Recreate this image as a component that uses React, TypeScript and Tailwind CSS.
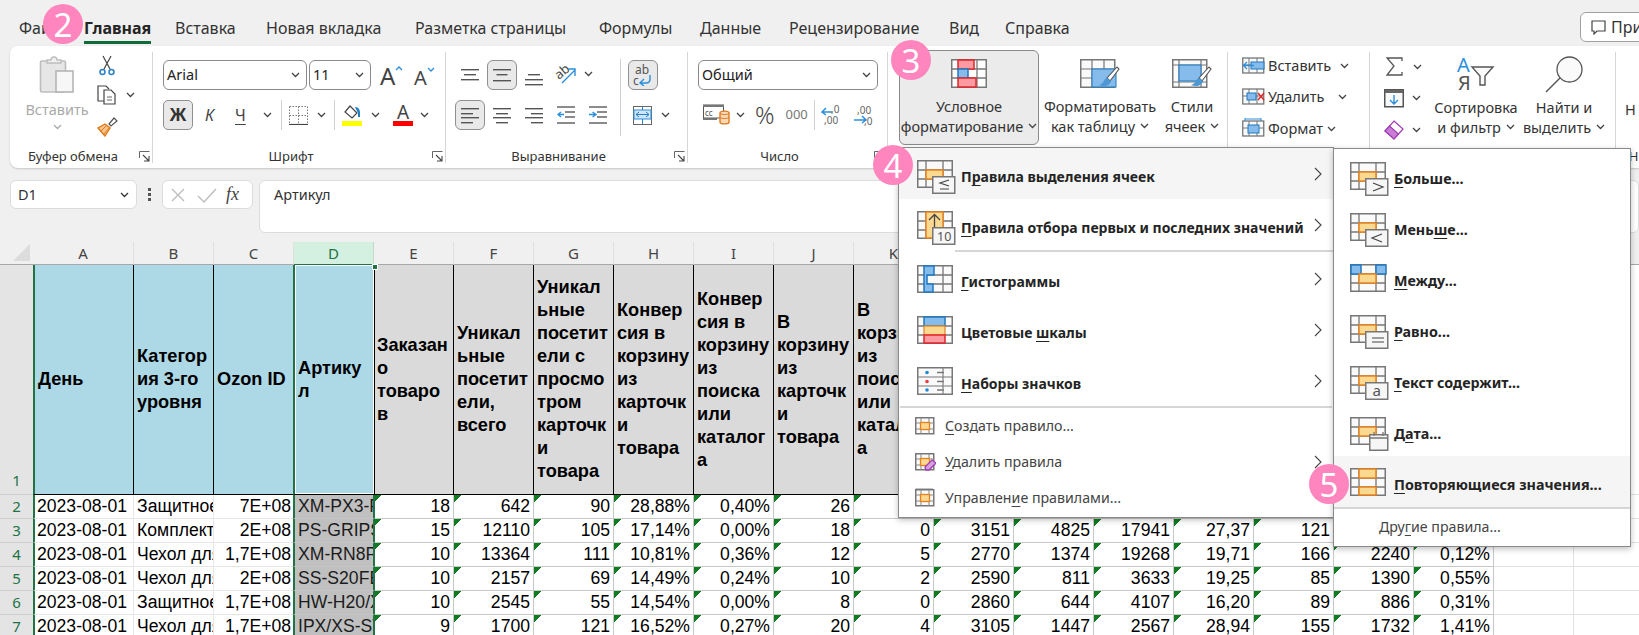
import React from "react";

const UI = "font-['Noto_Sans',sans-serif]";

function Chev({ c = "#444", className = "" }: { c?: string; className?: string }) {
  return (
    <svg width="9" height="6" viewBox="0 0 9 6" className={"shrink-0 " + className}>
      <path d="M1 1l3.5 3.5L8 1" fill="none" stroke={c} strokeWidth="1.3" />
    </svg>
  );
}

function Expand() {
  return (
    <svg width="11" height="11" viewBox="0 0 11 11" className="shrink-0">
      <path d="M.5 7V.5H10.5" fill="none" stroke="#666" />
      <path d="M10 10L4 4M10 5v5H5" fill="none" stroke="#444" strokeWidth="1.1" />
    </svg>
  );
}

function Group({ w, label, children, expand }: { w: string; label?: string; children: React.ReactNode; expand?: boolean }) {
  return (
    <div className={"mt-[6px] flex h-[111px] shrink-0 flex-col border-r border-[#d6d6d6] " + w}>
      <div className="min-h-0 flex-1">{children}</div>
      <div className="flex h-[14px] items-center">
        <div className="flex-1 whitespace-nowrap text-center text-[13px] leading-[14px] text-[#333]">{label}</div>
        <div className="flex w-[16px] justify-center">{expand ? <Expand /> : null}</div>
      </div>
    </div>
  );
}

function Lines({ ys, anchor }: { ys: [number, number][]; anchor?: string }) {
  return (
    <svg width="18" height="18" viewBox="0 0 18 18" className="shrink-0">
      {ys.map(([y, w], i) => {
        const x = anchor === "r" ? 18 - w : anchor === "c" ? (18 - w) / 2 : 0;
        return <rect key={i} x={x} y={y} width={w} height="1.4" fill="#555" />;
      })}
    </svg>
  );
}

function Sel({ w, text, ml }: { w: string; text: string; ml?: string }) {
  return (
    <div className={"flex h-[30px] items-center justify-between rounded-[6px] border border-[#8a8a8a] bg-white pl-[3px] pr-[6px] text-[14.5px] text-[#222] " + w + " " + (ml ?? "")}>
      <span>{text}</span>
      <Chev />
    </div>
  );
}

function VDiv({ className = "" }: { className?: string }) {
  return <div className={"h-[30px] w-px shrink-0 bg-[#d0d0d0] " + className} />;
}

function PasteIcon() {
  return (
    <svg width="36" height="40" viewBox="0 0 36 40" className="shrink-0">
      <rect x="1.5" y="6" width="25" height="31" rx="1.5" fill="#e6e6e6" stroke="#bdbdbd" strokeWidth="1.6" />
      <path d="M8 8V5h4c0-4 6-4 6 0h4v3z" fill="#f0f0f0" stroke="#bdbdbd" strokeWidth="1.4" />
      <rect x="17" y="16" width="17" height="21" fill="#f7f7f7" stroke="#b5b5b5" strokeWidth="1.6" />
    </svg>
  );
}

function Scissors() {
  return (
    <svg width="18" height="21" viewBox="0 0 18 21" className="shrink-0">
      <path d="M5 1l7 13M13 1L6 14" stroke="#444" strokeWidth="1.2" fill="none" />
      <circle cx="4.5" cy="17" r="2.5" fill="none" stroke="#2a7fc9" strokeWidth="1.5" />
      <circle cx="13.5" cy="17" r="2.5" fill="none" stroke="#2a7fc9" strokeWidth="1.5" />
    </svg>
  );
}

function CopyIcon() {
  return (
    <svg width="20" height="20" viewBox="0 0 20 20" className="shrink-0">
      <path d="M7 16H1V1h8l3 3" fill="#fff" stroke="#444" strokeWidth="1.2" />
      <path d="M7 5h7l4 4v10H7z" fill="#fff" stroke="#444" strokeWidth="1.2" />
      <path d="M10 12h5M10 15h5" stroke="#666" />
    </svg>
  );
}

function Brush() {
  return (
    <svg width="21" height="20" viewBox="0 0 21 20" className="shrink-0">
      <path d="M1 11l7 8 5-8-5-4z" fill="#f6c48c" stroke="#e07a1a" strokeWidth="1.4" />
      <path d="M4 14l5-5M7 17l5-6" stroke="#e07a1a" />
      <path d="M12 7l5-6 3 3-6 5z" fill="#fff" stroke="#555" strokeWidth="1.2" />
    </svg>
  );
}

function GrowA({ up }: { up?: boolean }) {
  return (
    <div className="flex w-[22px] items-start text-[#444]">
      <span className={"leading-none " + (up ? "text-[24px]" : "text-[20px] mt-[3px]")}>A</span>
      <svg width="8" height="5" viewBox="0 0 8 5" className="mt-[2px] shrink-0">
        <path d={up ? "M1 4l3-3 3 3" : "M1 1l3 3 3-3"} fill="none" stroke="#2a8fdc" strokeWidth="1.3" />
      </svg>
    </div>
  );
}

function BordersIcon() {
  return (
    <svg width="19" height="19" viewBox="0 0 19 19" className="shrink-0">
      <path d="M.5.5h18M.5 9.5h18M.5.5v18M9.5.5v18M18.5.5v18" stroke="#777" strokeDasharray="1.5 1.5" fill="none" />
      <path d="M0 18.5h19" stroke="#444" strokeWidth="1.2" />
    </svg>
  );
}

function FillIcon() {
  return (
    <div className="flex w-[20px] flex-col items-center">
      <svg width="20" height="15" viewBox="0 0 20 15">
        <path d="M8 1l7 7-5 5-7-6z" fill="#fff" stroke="#444" strokeWidth="1.2" />
        <path d="M13 2c3 0 5 2 5 6v4h-2V8z" fill="#1f7fc4" />
      </svg>
      <div className="mt-px h-[5px] w-[20px] bg-[#ffff00]" />
    </div>
  );
}

function ColorA() {
  return (
    <div className="flex w-[20px] flex-col items-center">
      <span className="h-[15px] text-[19px] leading-[15px] text-[#444]">A</span>
      <div className="mt-px h-[5px] w-[20px] bg-[#ff0000]" />
    </div>
  );
}

function Orient() {
  return (
    <svg width="21" height="20" viewBox="0 0 21 20" className="shrink-0">
      <text x="0" y="12" fontSize="13" fill="#444" transform="rotate(-40 6 8)" fontFamily="Noto Sans">ab</text>
      <path d="M7 18L20 5M13 4h7v7" fill="none" stroke="#2a8fdc" strokeWidth="1.4" />
    </svg>
  );
}

function WrapIcon() {
  return (
    <svg width="20" height="22" viewBox="0 0 20 22" className="shrink-0">
      <text x="2" y="10" fontSize="12" fill="#555" fontFamily="Noto Sans">ab</text>
      <text x="0" y="21" fontSize="12" fill="#555" fontFamily="Noto Sans">c</text>
      <path d="M17 11v4c0 3-2 4-4 4H8M11 15l-4 4 4 3" fill="none" stroke="#2a8fdc" strokeWidth="1.4" />
    </svg>
  );
}

function MergeIcon() {
  return (
    <svg width="19" height="19" viewBox="0 0 19 19" className="shrink-0">
      <rect x=".5" y=".5" width="18" height="18" fill="#fff" stroke="#666" />
      <rect x="1" y="4" width="17" height="9" fill="#cfe6f8" stroke="#2a8fdc" />
      <path d="M3 8.5h13M6 6L3 8.5 6 11M13 6l3 2.5-3 2.5M9.5 1v3M9.5 13v5" fill="none" stroke="#2a7fc9" />
    </svg>
  );
}

function Indent({ dir }: { dir: "l" | "r" }) {
  return (
    <svg width="18" height="18" viewBox="0 0 18 18" className="shrink-0">
      <path d="M0 1h18M8 6h10M8 11h10M0 17h18" stroke="#666" strokeWidth="1.3" />
      <path d={dir === "l" ? "M7 8.5H1M4 6L1 8.5 4 11" : "M0 8.5h6M3.500 6L7 8.5 3.500 11"} fill="none" stroke="#2a8fdc" strokeWidth="1.4" />
    </svg>
  );
}

function Currency() {
  return (
    <svg width="28" height="22" viewBox="0 0 28 22" className="shrink-0">
      <rect x=".5" y="1" width="20" height="13" fill="#fff" stroke="#555" />
      <path d="M0 1h21v2H0zM0 14h14v2H0z" fill="#777" />
      <text x="2" y="12" fontSize="8" fill="#555" fontFamily="Noto Sans">cc</text>
      <path d="M17 9c0-2.500 9-2.500 9 0v9c0 2.500-9 2.500-9 0z" fill="#fbd9b8" stroke="#e07a1a" strokeWidth="1.4" />
      <path d="M17 13c0 2 9 2 9 0M17 9c0 2 9 2 9 0" fill="none" stroke="#e07a1a" />
    </svg>
  );
}

function Decimal({ inc }: { inc?: boolean }) {
  return (
    <svg width="21" height="21" viewBox="0 0 21 21" className="shrink-0">
      {inc ? (
        <>
          <path d="M11 7H1M5 3L1 7l4 3" fill="none" stroke="#2a8fdc" strokeWidth="1.5" />
          <text x="10" y="8" fontSize="10" fill="#666" fontFamily="Noto Sans">,0</text>
          <text x="3" y="19" fontSize="10" fill="#666" fontFamily="Noto Sans">,00</text>
        </>
      ) : (
        <>
          <text x="4" y="9" fontSize="10" fill="#666" fontFamily="Noto Sans">,00</text>
          <path d="M1 15h11M9 11l4 4-4 3" fill="none" stroke="#2a8fdc" strokeWidth="1.5" />
          <text x="11" y="20" fontSize="10" fill="#666" fontFamily="Noto Sans">,0</text>
        </>
      )}
    </svg>
  );
}

const G = "#777";
function Base({ children, bx = 36, by = 28 }: { children?: React.ReactNode; bx?: number; by?: number }) {
  return (
    <svg width="39" height="34" viewBox="0 0 39 34" className="mt-[6px] shrink-0">
      <rect x=".75" y=".75" width={bx - 1.5} height={by - 1.5} fill="#fafafa" stroke={G} strokeWidth="1.5" />
      <path d="M9 1v26M26 1v26M1 10h34M1 19h34" stroke={G} strokeWidth="1.3" fill="none" />
      {children}
    </svg>
  );
}
const orange = { fill: "#fcd991", stroke: "#e8821e", strokeWidth: 1.5 };
const blue = { fill: "#86bcec", stroke: "#1f78c1", strokeWidth: 1.5 };
const red = { fill: "#fe9aa2", stroke: "#e0262a", strokeWidth: 1.5 };
const Center = () => <rect x="9" y="10" width="17" height="9" {...orange} />;
const Box = ({ children }: { children: React.ReactNode }) => (
  <>
    <rect x="15.75" y="16.75" width="22" height="16.5" fill="#f6f6f6" stroke={G} strokeWidth="1.5" />
    {children}
  </>
);

const Ico = {
  le: (
    <Base><Center /><Box><path d="M32 20l-9 3 9 3M23 29h9" fill="none" stroke="#444" strokeWidth="1.2" /></Box></Base>
  ),
  top: (
    <Base>
      <rect x="9" y="1" width="17" height="26" {...orange} />
      <path d="M17.500 20V4M12 9l5.500-5.500L23 9" fill="none" stroke="#444" strokeWidth="1.3" />
      <Box><text x="20" y="30" fontSize="12.500" fill="#555" fontFamily="Noto Sans">10</text></Box>
    </Base>
  ),
  bars: (
    <Base>
      <path d="M7 1h10v9h-7v9h6v8H7z" fill="#86bcec" stroke="#1f78c1" strokeWidth="1.5" />
    </Base>
  ),
  scale: (
    <Base>
      <rect x="7" y="1" width="21" height="9" {...blue} />
      <rect x="7" y="10" width="21" height="9" fill="#fcd991" stroke="#e8821e" strokeWidth="1.2" />
      <rect x="7" y="19" width="21" height="8" {...red} />
    </Base>
  ),
  sets: (
    <svg width="39" height="34" viewBox="0 0 39 34" className="mt-[6px] shrink-0">
      <rect x=".75" y=".75" width="34.500" height="26.500" fill="#fafafa" stroke={G} strokeWidth="1.5" />
      <path d="M1 10h34M1 19h34M26 1v26" stroke={G} strokeWidth="1.1" fill="none" />
      <circle cx="10" cy="5.500" r="1.800" fill="#1f88dc" />
      <circle cx="10" cy="14.500" r="1.800" fill="#f03a3a" />
      <circle cx="10" cy="23" r="1.800" fill="#1f88dc" />
      <path d="M20 5.500h7M20 14.500h7M20 23h7" stroke="#777" strokeWidth="1.4" />
    </svg>
  ),
  gt: (
    <Base><Center /><Box><path d="M23 21l10 4-10 4" fill="none" stroke="#444" strokeWidth="1.2" /></Box></Base>
  ),
  lt: (
    <Base><Center /><Box><path d="M32 21l-10 4 10 4" fill="none" stroke="#444" strokeWidth="1.2" /></Box></Base>
  ),
  between: (
    <Base>
      <rect x="1" y="1" width="10" height="9" {...blue} />
      <rect x="26" y="1" width="10" height="9" {...blue} />
      <Center />
    </Base>
  ),
  eq: (
    <Base><Center /><Box><path d="M22 23h12M22 27h12" stroke="#444" strokeWidth="1.2" /></Box></Base>
  ),
  a: (
    <Base><Center /><Box><text x="22.500" y="30" fontSize="15" fill="#555" fontFamily="Noto Sans">a</text></Box></Base>
  ),
  date: (
    <Base>
      <Center />
      <rect x="19.750" y="17.750" width="18" height="15.500" fill="#f6f6f6" stroke={G} strokeWidth="1.5" />
      <path d="M19 21h19M24 15v4M33 15v4" stroke={G} strokeWidth="1.3" />
    </Base>
  ),
  dup: (
    <Base>
      <rect x="9" y="1" width="17" height="9" {...orange} />
      <rect x="9" y="19" width="17" height="8" {...orange} />
    </Base>
  ),
};

function SmallIco({ kind }: { kind: "new" | "del" | "mng" }) {
  return (
    <svg width="22" height="20" viewBox="0 0 22 20" className="shrink-0">
      {kind === "mng" ? <path d="M2 18V1h17" fill="none" stroke="#888" strokeWidth="1.2" /> : null}
      <rect x="1.750" y="1.750" width="18" height="16" fill="#fafafa" stroke="#777" strokeWidth="1.500" />
      <path d="M7 2v16M15 2v16M2 7h18M2 13h18" stroke="#888" />
      <rect x="6.500" y="6.500" width="9" height="7" fill="#fcd991" stroke="#e8821e" strokeWidth="1.300" />
      {kind === "del" ? <path d="M11 15l7-7 4 3-7 7-3 0z" fill="#d7a1de" stroke="#a03cb4" strokeWidth="1.300" /> : null}
    </svg>
  );
}

function U({ children }: { children: React.ReactNode }) {
  return <span className="underline underline-offset-[3px]">{children}</span>;
}

function Arrow() {
  return (
    <svg width="8" height="14" viewBox="0 0 8 14" className="ml-auto mr-[11px] shrink-0">
      <path d="M1 1l6 6-6 6" fill="none" stroke="#444" strokeWidth="1.1" />
    </svg>
  );
}

function MenuItem({ icon, children, arrow, active, pl = "pl-[18px]", size = "text-[14px]" }: { icon: React.ReactNode; children: React.ReactNode; arrow?: boolean; active?: boolean; pl?: string; size?: string }) {
  return (
    <div className={"flex h-[51px] items-center " + pl + " " + (active ? "bg-[#f5f5f5]" : "")}>
      {icon}
      <div className={"ml-[5px] mt-[6px] whitespace-nowrap font-bold text-[#242424] " + size}>{children}</div>
      {arrow ? <Arrow /> : null}
    </div>
  );
}

function SmallItem({ kind, children, arrow }: { kind: "new" | "del" | "mng"; children: React.ReactNode; arrow?: boolean }) {
  return (
    <div className="flex h-[36px] items-center pl-[15px]">
      <SmallIco kind={kind} />
      <div className="ml-[9px] whitespace-nowrap text-[14.2px] text-[#444]">{children}</div>
      {arrow ? <Arrow /> : null}
    </div>
  );
}

function Badge({ n, pos }: { n: number; pos: string }) {
  return (
    <div className={"absolute flex h-[40px] w-[40px] items-center justify-center rounded-full bg-[#ff85bf] text-[33px] leading-none text-white " + pos}>
      {n}
    </div>
  );
}

const letters = ["A", "B", "C", "D", "E", "F", "G", "H", "I", "J", "K", "L", "M", "N", "O", "P", "Q", "R", "S", "T"];

const heads: { lines: string[]; bg: string }[] = [
  { lines: ["День"], bg: "blue" },
  { lines: ["Категор", "ия 3-го", "уровня"], bg: "blue" },
  { lines: ["Ozon ID"], bg: "blue" },
  { lines: ["Артику", "л"], bg: "sel" },
  { lines: ["Заказан", "о", "товаро", "в"], bg: "gray" },
  { lines: ["Уникал", "ьные", "посетит", "ели,", "всего"], bg: "gray" },
  { lines: ["Уникал", "ьные", "посетит", "ели с", "просмо", "тром", "карточк", "и", "товара"], bg: "gray" },
  { lines: ["Конвер", "сия в", "корзину", "из", "карточк", "и", "товара"], bg: "gray" },
  { lines: ["Конвер", "сия в", "корзину", "из", "поиска", "или", "каталог", "а"], bg: "gray" },
  { lines: ["В", "корзину", "из", "карточк", "и", "товара"], bg: "gray" },
  { lines: ["В", "корзину", "из", "поиска", "или", "каталог", "а"], bg: "gray" },
  { lines: [""], bg: "gray" },
  { lines: [""], bg: "gray" },
  { lines: [""], bg: "gray" },
  { lines: [""], bg: "gray" },
  { lines: [""], bg: "gray" },
  { lines: [""], bg: "gray" },
  { lines: [""], bg: "gray" },
  { lines: [""], bg: "none" },
  { lines: [""], bg: "none" },
];

const rows: string[][] = [
  ["2023-08-01", "Защитное стекло", "7E+08", "XM-PX3-F", "18", "642", "90", "28,88%", "0,40%", "26", "", "", "", "", "", "", "", "", "", ""],
  ["2023-08-01", "Комплект для", "2E+08", "PS-GRIPS", "15", "12110", "105", "17,14%", "0,00%", "18", "0", "3151", "4825", "17941", "27,37", "121", "", "", "", ""],
  ["2023-08-01", "Чехол для", "1,7E+08", "XM-RN8P", "10", "13364", "111", "10,81%", "0,36%", "12", "5", "2770", "1374", "19268", "19,71", "166", "2240", "0,12%", "", ""],
  ["2023-08-01", "Чехол для", "2E+08", "SS-S20FE", "10", "2157", "69", "14,49%", "0,24%", "10", "2", "2590", "811", "3633", "19,25", "85", "1390", "0,55%", "", ""],
  ["2023-08-01", "Защитное стекло", "1,7E+08", "HW-H20/X", "10", "2545", "55", "14,54%", "0,00%", "8", "0", "2860", "644", "4107", "16,20", "89", "886", "0,31%", "", ""],
  ["2023-08-01", "Чехол для", "1,7E+08", "IPX/XS-ST", "9", "1700", "121", "16,52%", "0,27%", "20", "4", "3105", "1447", "2567", "28,94", "155", "1732", "1,41%", "", ""],
];

function Sheet() {
  return (
    <div className="grid grid-cols-[33px_101px_repeat(19,80px)] grid-rows-[23px_230px_repeat(6,24px)] bg-white font-['Liberation_Sans',Arial,sans-serif] text-[17.6px] text-black">
      <div className={"flex items-center justify-end border-b border-[#a8a8a8] bg-[#f0f0f0] pr-[3px] " + UI}>
        <div className="mt-[-2px] h-0 w-0 border-b-[17px] border-l-[17px] border-b-[#dcdcdc] border-l-transparent" />
      </div>
      {letters.map((l) => (
        <div key={l} className={"flex items-center justify-center border-b border-r text-[15px] " + UI + " " + (l === "D" ? "border-r-[#c4d8cc] border-b-[#217346] bg-[#d3f0e0] text-[#217346]" : "border-r-[#e0e0e0] border-b-[#a8a8a8] bg-[#f0f0f0] text-[#444]")}>
          {l}
        </div>
      ))}

      <div className={"flex items-end justify-center border-b border-[#cfcfcf] bg-[#e4e4e4] pb-[3px] text-[15px] text-[#217346] " + UI}>1</div>
      {heads.map((h, i) => {
        const bg = h.bg === "gray" ? "bg-[#dadada] border-r border-r-black border-b border-b-black" : h.bg === "none" ? "border-r border-r-[#e0e0e0] border-b border-b-[#e0e0e0]" : "bg-[#add8e6] border-r border-r-black border-b border-b-black";
        const extra = i === 0 ? " border-l-2 border-l-[#217346]" : i === 3 ? " border-x-2 border-x-[#217346] ml-[-1px] mr-[-1px] z-10" : "";
        return (
          <div key={i} className={"relative flex items-center pl-[3px] text-[18.2px] font-bold leading-[23px] " + bg + extra}>
            <div className="whitespace-nowrap">
              {h.lines.map((t, j) => (
                <div key={j}>{t || "\u00a0"}</div>
              ))}
            </div>
            {i === 3 ? (
              <>
                <div className="absolute inset-0 border border-white" />
                <div className="absolute right-[-4px] top-[-1px] h-[6px] w-[6px] border border-white bg-[#217346]" />
              </>
            ) : null}
          </div>
        );
      })}

      {rows.map((r, ri) => (
        <React.Fragment key={ri}>
          <div className={"flex items-center justify-center border-b border-[#cfcfcf] bg-[#e4e4e4] text-[15px] text-[#217346] " + UI}>{ri + 2}</div>
          {r.map((v, ci) => {
            if (ci < 4) {
              const cls =
                ci === 0
                  ? "border-l-2 border-l-[#217346] border-r border-r-[#e6e6e6] border-b border-b-[#e6e6e6] pl-[2px]"
                  : ci === 1
                  ? "border-r border-r-[#e6e6e6] border-b border-b-[#e6e6e6] pl-[3px]"
                  : ci === 2
                  ? "justify-end border-b border-b-[#e6e6e6] pr-[3px]"
                  : "z-10 ml-[-1px] mr-[-1px] border-x-2 border-x-[#217346] border-b border-b-[#c4c4c4] bg-[#c0c0c0] pl-[3px] text-[#1c1c1c]";
              return (
                <div key={ci} className={"flex items-center overflow-hidden whitespace-nowrap " + cls}>
                  {v}
                </div>
              );
            }
            if (ci >= 18) return <div key={ci} className="border-b border-r border-[#e2e2e2]" />;
            return (
              <div key={ci} className="flex items-center justify-end border-b border-r border-[#c8c8c8] bg-[linear-gradient(135deg,#0f7d1f_5px,transparent_5px)] pr-[3px]">
                {v}
              </div>
            );
          })}
        </React.Fragment>
      ))}
    </div>
  );
}

const BrushOver = () => (
  <>
    <path d="M37 8l-10 11 3 3 9-12z" fill="#fff" stroke="#555" strokeWidth="1.100" />
    <path d="M27 19c-4 1-2 5-8 7 5 2 11 1 12-4z" fill="#4c97d4" />
  </>
);

function Ribbon() {
  const big = "text-[14.5px] leading-[20px] text-[#333] whitespace-nowrap";
  return (
    <div className="ml-[10px] flex h-[122px] rounded-l-[8px] bg-white text-[#333] shadow-[0_1px_2px_rgba(0,0,0,0.18)]">
      <Group w="w-[143px]" label="Буфер обмена" expand>
        <div className="flex">
          <div className="ml-[12px] flex w-[70px] flex-col items-center pt-[3px]">
            <PasteIcon />
            <div className="mt-[4px] text-[14.5px] leading-[20px] text-[#aaaaaa]">Вставить</div>
            <Chev c="#aaa" className="mt-[5px]" />
          </div>
          <div className="ml-[5px] flex flex-col pt-[3px]">
            <div className="ml-[1px]"><Scissors /></div>
            <div className="mt-[9px] flex items-center">
              <CopyIcon />
              <Chev className="ml-[9px]" />
            </div>
            <div className="mt-[12px]"><Brush /></div>
          </div>
        </div>
      </Group>
      <Group w="w-[293px]" label="Шрифт" expand>
        <div className="flex h-[38px] items-end pl-[10px]">
          <Sel w="w-[144px]" text="Arial" />
          <Sel w="w-[62px]" text="11" ml="ml-[2px]" />
          <div className="ml-[9px] flex items-start self-end pb-[2px]"><GrowA up /></div>
          <div className="ml-[12px] flex items-start self-end pb-[2px]"><GrowA /></div>
        </div>
        <div className="mt-[10px] flex h-[30px] items-center pl-[10px]">
          <div className="flex h-[30px] w-[30px] items-center justify-center rounded-[5px] border border-[#8f8f8f] bg-[#e9e9e9] text-[17px] font-bold text-[#333]">Ж</div>
          <span className="ml-[12px] w-[20px] text-[16px] italic text-[#444]">К</span>
          <span className="ml-[10px] w-[17px] text-[16px] text-[#444] underline underline-offset-[3px]">Ч</span>
          <Chev className="ml-[11px]" />
          <VDiv className="ml-[9px]" />
          <span className="ml-[7px]"><BordersIcon /></span>
          <Chev className="ml-[9px]" />
          <VDiv className="ml-[8px]" />
          <span className="ml-[7px]"><FillIcon /></span>
          <Chev className="ml-[9px]" />
          <span className="ml-[13px]"><ColorA /></span>
          <Chev className="ml-[7px]" />
        </div>
      </Group>
      <Group w="w-[242px]" label="Выравнивание" expand>
        <div className="flex">
          <div className="w-[174px]">
            <div className="flex h-[38px] items-end pl-[15px]">
              <div className="mb-[6px]"><Lines ys={[[3, 18], [8, 12], [13, 18]]} anchor="c" /></div>
              <div className="ml-[8px] flex h-[30px] w-[30px] items-center justify-center rounded-[6px] border border-[#8f8f8f] bg-[#e9e9e9]">
                <Lines ys={[[3, 18], [8, 11], [14, 18]]} anchor="c" />
              </div>
              <div className="ml-[8px] mb-[4px]"><Lines ys={[[6, 12], [11, 18], [16, 18]]} anchor="c" /></div>
              <div className="ml-[12px] mb-[5px]"><Orient /></div>
              <Chev className="mb-[13px] ml-[8px]" />
            </div>
            <div className="mt-[10px] flex h-[30px] items-center pl-[9px]">
              <div className="flex h-[30px] w-[30px] items-center justify-center rounded-[6px] border border-[#8f8f8f] bg-[#e9e9e9]">
                <Lines ys={[[2, 18], [7, 12], [11, 18], [16, 12]]} />
              </div>
              <div className="ml-[8px]"><Lines ys={[[2, 18], [7, 12], [11, 18], [16, 12]]} anchor="c" /></div>
              <div className="ml-[14px]"><Lines ys={[[2, 18], [7, 12], [11, 18], [16, 12]]} anchor="r" /></div>
              <div className="ml-[14px]"><Indent dir="l" /></div>
              <div className="ml-[14px]"><Indent dir="r" /></div>
            </div>
          </div>
          <div className="mt-[7px] h-[77px] w-px bg-[#d0d0d0]" />
          <div className="ml-[7px]">
            <div className="mt-[8px] flex h-[30px] w-[30px] items-center justify-center rounded-[6px] border border-[#8f8f8f] bg-[#e9e9e9]">
              <WrapIcon />
            </div>
            <div className="mt-[10px] flex h-[30px] items-center pl-[5px]">
              <MergeIcon />
              <Chev className="ml-[9px]" />
            </div>
          </div>
        </div>
      </Group>
      <Group w="w-[200px]" label="Число" expand>
        <div className="flex h-[38px] items-end pl-[10px]">
          <Sel w="w-[180px]" text="Общий" />
        </div>
        <div className="mt-[10px] flex h-[30px] items-center pl-[15px]">
          <Currency />
          <Chev className="ml-[5px]" />
          <span className="ml-[10px] text-[24px] font-light leading-none text-[#444]">%</span>
          <span className="ml-[11px] text-[13px] text-[#777]">000</span>
          <VDiv className="ml-[6px]" />
          <span className="ml-[6px]"><Decimal inc /></span>
          <span className="ml-[11px]"><Decimal /></span>
        </div>
      </Group>
      <Group w="w-[340px]">
        <div className="flex h-full">
          <div className="ml-[11px] mt-[-2px] flex h-[95px] w-[140px] flex-col items-center rounded-[6px] border border-[#8a8a8a] bg-[#ebebeb] pt-[8px]">
            <svg width="36" height="29" viewBox="0 0 36 29">
              <rect x=".75" y=".75" width="34.5" height="27.500" fill="#fff" stroke={G} strokeWidth="1.5" />
              <path d="M9 1v27M26 1v27M1 10h34M1 19h34" stroke={G} strokeWidth="1.3" />
              <rect x="7" y="1" width="16" height="9" {...red} />
              <rect x="7" y="10" width="10" height="9" {...blue} />
              <rect x="7" y="19" width="18" height="9" {...red} />
            </svg>
            <div className={"mt-[8px] " + big}>Условное</div>
            <div className={"flex items-center " + big}>форматирование<Chev className="ml-[5px]" /></div>
          </div>
          <div className="mt-[7px] flex w-[122px] flex-col items-center">
            <svg width="40" height="29" viewBox="0 0 40 29">
              <rect x=".75" y=".75" width="34" height="27.500" fill="#fafafa" stroke={G} strokeWidth="1.5" />
              <path d="M12 1v27M24 1v27M1 10h34M1 19h34" stroke={G} strokeWidth="1.2" />
              <rect x="12" y="10" width="24" height="18" fill="#86bcec" stroke="#1f78c1" />
              <BrushOver />
            </svg>
            <div className={"mt-[8px] " + big}>Форматировать</div>
            <div className={"flex items-center " + big}>как таблицу<Chev className="ml-[5px]" /></div>
          </div>
          <div className="mt-[7px] flex w-[62px] flex-col items-center">
            <svg width="40" height="29" viewBox="0 0 40 29">
              <rect x=".75" y=".75" width="34" height="27.500" fill="#fafafa" stroke={G} strokeWidth="1.5" />
              <path d="M1 6h34M1 23h34M7 1v27M29 1v27" stroke={G} strokeWidth="1.2" />
              <rect x="7" y="6" width="22" height="16" fill="#86bcec" stroke="#1f78c1" />
              <BrushOver />
            </svg>
            <div className={"mt-[8px] " + big}>Стили</div>
            <div className={"flex items-center " + big}>ячеек<Chev className="ml-[5px]" /></div>
          </div>
        </div>
      </Group>
      <Group w="w-[142px]">
        <div className="mt-[-2px] flex flex-col pl-[14px] text-[14.5px]">
          {[
            ["Вставить", "ml-[9px]", "ins"],
            ["Удалить", "ml-[13px]", "del"],
            ["Формат", "ml-[4px]", "fmt"],
          ].map(([t, m, k]) => (
            <div key={t} className="flex h-[31.500px] items-center">
              <svg width="23" height="22" viewBox="0 0 23 22" className="shrink-0">
                <rect x=".75" y="3" width="21" height="15" fill="#fafafa" stroke={G} strokeWidth="1.3" />
                <path d="M7 3v15M15 3v15M1 10h21" stroke={G} />
                {k === "ins" ? <><rect x="9" y="7" width="13" height="7" fill="#86bcec" stroke="#1f78c1" /><path d="M12 10.500H2M5 7l-3.500 3.500L5 14" fill="none" stroke="#2a8fdc" strokeWidth="1.3" /></> : null}
                {k === "del" ? <><rect x="5" y="7" width="9" height="7" fill="#86bcec" stroke="#1f78c1" /><path d="M16 7l6 7M22 7l-6 7" stroke="#e0262a" strokeWidth="1.4" /></> : null}
                {k === "fmt" ? <><rect x="6" y="7" width="11" height="8" fill="#86bcec" stroke="#1f78c1" /><path d="M3 1h16M3 0v3M19 0v3" stroke="#2a8fdc" /></> : null}
              </svg>
              <span className="ml-[3px] whitespace-nowrap">{t}</span>
              <Chev className={m} />
            </div>
          ))}
        </div>
      </Group>
      <Group w="w-[246px]">
        <div className="flex">
          <div className="ml-[14px] mt-[-1px] flex flex-col">
            <div className="flex h-[31.500px] items-center pl-[2px]">
              <svg width="17" height="19" viewBox="0 0 17 19" className="shrink-0"><path d="M16 4V1H1l7 8-7 9h15v-3" fill="none" stroke="#555" strokeWidth="1.3" /></svg>
              <Chev className="ml-[10px]" />
            </div>
            <div className="flex h-[31.500px] items-center">
              <svg width="20" height="19" viewBox="0 0 20 19" className="shrink-0">
                <rect x=".75" y=".75" width="18.500" height="17" fill="#fafafa" stroke="#555" strokeWidth="1.5" />
                <rect x="1" y="1" width="18" height="3" fill="#666" />
                <path d="M10 6v9M6 11l4 4 4-4" fill="none" stroke="#2a8fdc" strokeWidth="1.4" />
              </svg>
              <Chev className="ml-[8px]" />
            </div>
            <div className="flex h-[31.500px] items-center">
              <svg width="20" height="20" viewBox="0 0 20 20" className="shrink-0">
                <path d="M10 1l9 8-9 10-9-8z" fill="#fff" stroke="#a03cb4" strokeWidth="1.2" />
                <path d="M5.500 6l9 8-4.500 5-9-8z" fill="#c97ed6" stroke="#a03cb4" strokeWidth="1.2" />
              </svg>
              <Chev className="ml-[8px]" />
            </div>
          </div>
          <div className="ml-[9px] flex w-[90px] flex-col items-center pt-[4px] text-[14.5px] leading-[20px]">
            <svg width="38" height="36" viewBox="0 0 38 36">
              <text x="0" y="16" fontSize="20" fill="#2a8fdc" fontFamily="Noto Sans">А</text>
              <text x="1" y="34" fontSize="20" fill="#555" fontFamily="Noto Sans">Я</text>
              <path d="M15 11h21l-8 9v9h-5v-9z" fill="#fafafa" stroke="#555" strokeWidth="1.4" />
            </svg>
            <div className="mt-[5px] whitespace-nowrap">Сортировка</div>
            <div className="flex items-center whitespace-nowrap">и фильтр<Chev className="ml-[5px]" /></div>
          </div>
          <div className="ml-[3px] flex w-[80px] flex-col items-center pt-[4px] text-[14.5px] leading-[20px]">
            <svg width="38" height="38" viewBox="0 0 38 38">
              <circle cx="24.500" cy="13.500" r="12.500" fill="#fafafa" stroke="#555" strokeWidth="1.3" />
              <path d="M15 22L1 36" stroke="#555" strokeWidth="1.5" />
            </svg>
            <div className="mt-[3px]">Найти и</div>
            <div className="flex items-center whitespace-nowrap">выделить<Chev className="ml-[5px]" /></div>
          </div>
        </div>
      </Group>
      <Group w="w-[52px]" label="Н">
        <div className="ml-[9px] mt-[47px] text-[14.5px] leading-[20px]">Н</div>
      </Group>
    </div>
  );
}

export default function App() {
  const tabs: [string, string][] = [
    ["Файл", "w-[65px]"],
    ["Главная", "w-[91px]"],
    ["Вставка", "w-[91px]"],
    ["Новая вкладка", "w-[149px]"],
    ["Разметка страницы", "w-[184px]"],
    ["Формулы", "w-[101px]"],
    ["Данные", "w-[89px]"],
    ["Рецензирование", "w-[160px]"],
    ["Вид", "w-[56px]"],
    ["Справка", "w-[70px]"],
  ];
  return (
    <div className={"relative h-[635px] w-[1639px] overflow-hidden bg-[#f0f0f0] " + UI}>
      <div className="flex h-[46px] items-start pl-[19px] pt-[16px] text-[16px] text-[#333]">
        {tabs.map(([t, w]) => (
          <div key={t} className={"whitespace-nowrap leading-[24px] " + w}>
            {t === "Главная" ? (
              <span className="inline-block border-b-[3px] border-[#0f6b3a] pb-[1px] font-bold text-[#242424]">{t}</span>
            ) : (
              t
            )}
          </div>
        ))}
        <div className="ml-auto mt-[-4px] flex h-[30px] w-[70px] translate-x-[11px] items-center rounded-[6px] border border-[#a0a0a0] bg-white pl-[10px] text-[#333]">
          <svg width="15" height="15" viewBox="0 0 15 15" className="mr-[5px] shrink-0">
            <path d="M1 1h13v10H6l-3 3v-3H1z" fill="none" stroke="#444" strokeWidth="1.2" />
          </svg>
          При
        </div>
      </div>

      <Ribbon />

      <div className="flex h-[74px] items-start pt-[12px] text-[14.5px] text-[#333]">
        <div className="ml-[10px] flex h-[29px] w-[127px] items-center justify-between rounded-[6px] border border-[#dcdcdc] bg-white pl-[7px] pr-[7px]">
          D1
          <Chev c="#333" />
        </div>
        <div className="ml-[10px] flex h-[29px] w-[4px] flex-col items-center justify-center gap-[2px]">
          <i className="block h-[3px] w-[3px] bg-[#555]" />
          <i className="block h-[3px] w-[3px] bg-[#555]" />
          <i className="block h-[3px] w-[3px] bg-[#555]" />
        </div>
        <div className="ml-[11px] flex h-[29px] w-[91px] items-center rounded-[6px] border border-[#dcdcdc] bg-white pl-[7px]">
          <svg width="16" height="16" viewBox="0 0 16 16"><path d="M2 2l12 12M14 2L2 14" stroke="#bdbdbd" strokeWidth="1.400" /></svg>
          <svg width="22" height="16" viewBox="0 0 22 16" className="ml-[10px]"><path d="M2 9l6 6L20 2" fill="none" stroke="#bdbdbd" strokeWidth="1.400" /></svg>
          <span className="ml-[8px] font-['Liberation_Serif',serif] text-[18px] italic text-[#444]">fx</span>
        </div>
        <div className="ml-[6px] h-[53px] flex-1 rounded-[6px] border border-[#dcdcdc] bg-white pl-[14px] pt-[3px]">Артикул</div>
      </div>

      <Sheet />

      <Badge n={1} pos="left-[313px] top-[290px]" />
      <Badge n={2} pos="left-[43px] top-[4px]" />
      <Badge n={3} pos="left-[891px] top-[40px]" />

      <div className="absolute left-[898px] top-[147px] h-[371px] w-[436px] border border-[#8a8a8a] bg-white shadow-[0_2px_6px_rgba(0,0,0,0.25)]">
        <MenuItem icon={Ico.le} active arrow><>П<U>р</U>авила выделения ячеек</></MenuItem>
        <MenuItem icon={Ico.top} arrow><><U>П</U>равила отбора первых и последних значений</></MenuItem>
        <div className="mb-px ml-[56px] h-[2px] bg-[#d6d6d6]" />
        <MenuItem icon={Ico.bars} arrow><><U>Г</U>истограммы</></MenuItem>
        <MenuItem icon={Ico.scale} arrow><>Цветовые <U>ш</U>калы</></MenuItem>
        <MenuItem icon={Ico.sets} arrow><><U>Н</U>аборы значков</></MenuItem>
        <div className="mx-px h-[2px] bg-[#d6d6d6]" />
        <SmallItem kind="new"><><U>С</U>оздать правило...</></SmallItem>
        <SmallItem kind="del" arrow><><U>У</U>далить правила</></SmallItem>
        <SmallItem kind="mng"><>Управлен<U>и</U>е правилами...</></SmallItem>
      </div>

      <div className="absolute left-[1333px] top-[148px] h-[399px] w-[298px] border border-[#8a8a8a] bg-white pt-px shadow-[0_2px_6px_rgba(0,0,0,0.25)]">
        <MenuItem size="text-[14.3px]" pl="pl-[16px]" icon={Ico.gt}><><U>Б</U>ольше...</></MenuItem>
        <MenuItem size="text-[14.3px]" pl="pl-[16px]" icon={Ico.lt}><>Мень<U>ш</U>е...</></MenuItem>
        <MenuItem size="text-[14.3px]" pl="pl-[16px]" icon={Ico.between}><><U>М</U>ежду...</></MenuItem>
        <MenuItem size="text-[14.3px]" pl="pl-[16px]" icon={Ico.eq}><><U>Р</U>авно...</></MenuItem>
        <MenuItem size="text-[14.3px]" pl="pl-[16px]" icon={Ico.a}><><U>Т</U>екст содержит...</></MenuItem>
        <MenuItem size="text-[14.3px]" pl="pl-[16px]" icon={Ico.date}><>Д<U>а</U>та...</></MenuItem>
        <MenuItem size="text-[14.3px]" pl="pl-[16px]" icon={Ico.dup} active><><U>П</U>овторяющиеся значения...</></MenuItem>
        <div className="h-[2px] bg-[#d6d6d6]" />
        <div className="flex h-[36px] items-center pl-[45px] text-[14.2px] text-[#444]">Дру<U>г</U>ие правила...</div>
      </div>

      <Badge n={4} pos="left-[873px] top-[145px]" />
      <Badge n={5} pos="left-[1309px] top-[464px]" />
    </div>
  );
}
